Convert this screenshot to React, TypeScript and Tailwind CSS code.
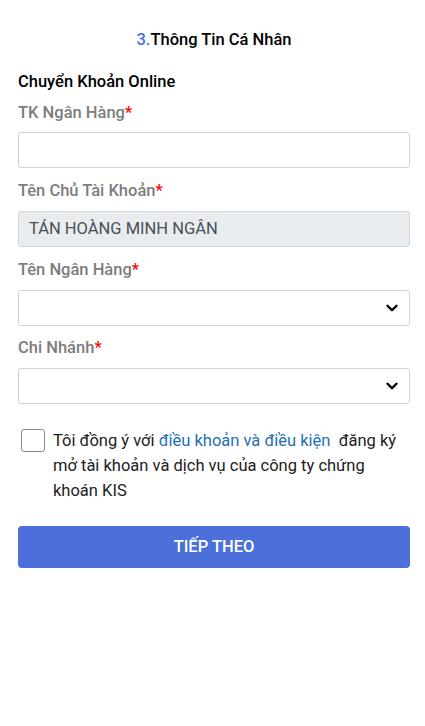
import { ChevronDown } from 'lucide-react';

function Label({ text, top = 'mt-[11px]' }: { text: string; top?: string }) {
  return (
    <div className={`${top} text-[16.5px] leading-6 font-medium text-[#7d7d7d]`}>
      {text}
      <span className="text-[#ff0000]">*</span>
    </div>
  );
}

function SelectBox() {
  return (
    <div className="mt-[8px] flex h-[36px] items-center justify-end rounded-[3px] border border-[#ced4da] bg-white pr-[8px]">
      <ChevronDown size={18} strokeWidth={3.2} className="text-black" />
    </div>
  );
}

export default function App() {
  return (
    <div
      className="min-h-[726px] w-full bg-white pl-[18px] pr-[15px]"
      style={{ fontFamily: 'Roboto, "Noto Sans", sans-serif' }}
    >
      <div className="pt-[28px] text-center text-[16.5px] leading-6 font-medium text-black">
        <span className="text-[#4c6fd9]">3.</span>Thông Tin Cá Nhân
      </div>

      <div className="mt-[18px] text-[16.5px] leading-6 font-medium text-black">Chuyển Khoản Online</div>

      <div className="mt-[7px] text-[16.5px] leading-6 font-medium text-[#7d7d7d]">
        TK Ngân Hàng<span className="text-[#ff0000]">*</span>
      </div>
      <input
        type="text"
        className="mt-[7px] block h-[36px] w-full rounded-[3px] border border-[#ced4da] bg-white px-3 text-[16px] outline-none"
      />

      <Label text="Tên Chủ Tài Khoản" />
      <div className="mt-[8px] flex h-[36px] items-center rounded-[3px] border border-[#ced4da] bg-[#e9ecef] px-[10px] text-[16.5px] text-[#495057]">
        TÁN HOÀNG MINH NGÂN
      </div>

      <Label text="Tên Ngân Hàng" />
      <SelectBox />

      <Label text="Chi Nhánh" top="mt-[10px]" />
      <SelectBox />

      <div className="mt-[24px] flex items-start gap-[8px]">
        <div className="ml-[3px] mt-[1px] h-[23px] w-[24px] shrink-0 rounded-[3px] border-[1.5px] border-[#8a8a8a] bg-white" />
        <p className="text-[16.5px] leading-[25px] text-[#212121]">
          Tôi đồng ý với <span className="text-[#1f6fb5]">điều khoản và điều kiện</span>&nbsp; đăng ký mở tài
          khoản và dịch vụ của công ty chứng khoán KIS
        </p>
      </div>

      <button className="mt-[23px] flex h-[42px] w-full items-center justify-center rounded-[4px] bg-[#4c6fd9] text-[16.5px] font-medium text-white">
        TIẾP THEO
      </button>
    </div>
  );
}
